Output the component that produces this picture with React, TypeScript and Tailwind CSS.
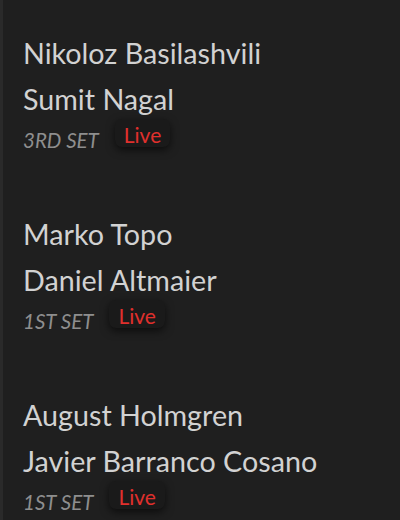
import React from "react";

const matches = [
  { a: "Nikoloz Basilashvili", b: "Sumit Nagal", set: "3RD SET" },
  { a: "Marko Topo", b: "Daniel Altmaier", set: "1ST SET" },
  { a: "August Holmgren", b: "Javier Barranco Cosano", set: "1ST SET" },
];

export default function App() {
  return (
    <div
      className="w-[400px] h-[520px] overflow-hidden bg-[#1f1f1f] flex"
      style={{ fontFamily: "Lato, 'Noto Sans', sans-serif" }}
    >
      <div className="w-[3px] h-full bg-[#2a2a2a] shrink-0" />
      <div className="flex-1 flex flex-col pl-[20px]">
        {matches.map((m, i) => (
          <div key={i} className="h-[181px] shrink-0 pt-[30px] flex flex-col">
            <div className="text-[28.7px] leading-[46px] text-[#d2d2d2]">{m.a}</div>
            <div className="text-[28.7px] leading-[46px] text-[#d2d2d2]">{m.b}</div>
            <div className="flex items-start mt-[-3px]">
              <div className="mt-[8px] text-[20.5px] leading-[26px] italic text-[#8e8e8e]">{m.set}</div>
              <div className="ml-[16px] h-[28px] pt-[3px] px-[9px] rounded-[7px] bg-[#1a1a1a] shadow-[0_3px_9px_rgba(0,0,0,0.6)] text-[21px] leading-[25px] text-[#e0302d]">
                Live
              </div>
            </div>
          </div>
        ))}
      </div>
    </div>
  );
}
